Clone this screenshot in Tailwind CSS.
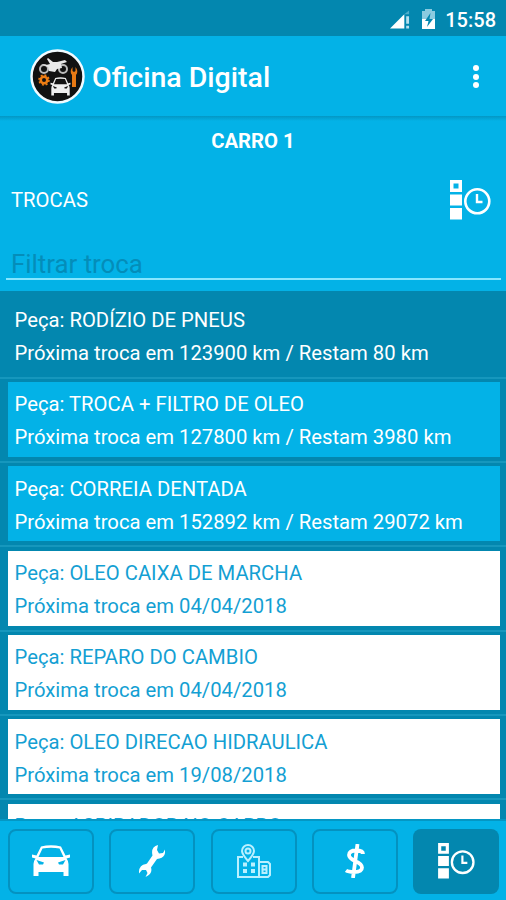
<!DOCTYPE html>
<html lang="pt-BR">
<head>
<meta charset="utf-8">
<title>Oficina Digital</title>
<script src="https://cdn.jsdelivr.net/npm/@tailwindcss/browser@4"></script>
</head>
<body class="w-[506px] h-[900px] overflow-hidden bg-[#03b2e7] font-[Roboto,sans-serif] text-white">
<svg class="hidden">
  <symbol id="schedule" viewBox="0 0 42 40">
    <path fill="currentColor" fill-rule="evenodd" d="M0 0h12v12H0zM3.5 3.5v5h5v-5zM0 14.5h12v11H0zM0 28h12v11.5H0z"/>
    <circle cx="27.3" cy="21.3" r="12" fill="none" stroke="currentColor" stroke-width="2.6"/>
    <path d="M27 14v8h5.500" fill="none" stroke="currentColor" stroke-width="2.4"/>
  </symbol>
  <symbol id="car" viewBox="0 0 40 32">
    <path fill="currentColor" fill-rule="evenodd" d="M10 1.500Q20-1 30 1.500L34.500 10.500 39 9.500V12.500L35.500 13.500Q37.500 16 37.500 19V31H32.500V27H7.500V31H2.500V19Q2.500 16 4.500 13.500L1 12.500V9.500L5.500 10.500ZM11.500 3.500 7.500 12H32.500L28.500 3.500Q20 2 11.500 3.500ZM5.500 15 13 17.500 12 19.500H8ZM34.500 15 27 17.500 28 19.500H32Z"/>
  </symbol>
  <symbol id="wrench" viewBox="0 0 26 32">
    <path fill="currentColor" d="M19 0 18 5 20 8.500 24 8 26 4.500Q27 12 20.500 13.500L18 14 12 22.500Q14 29 6.500 32L8.500 28 7 25 3 25 0 28.500Q-.5 20 7 19L8 18.500 13.500 10.500Q11.500 2 19 0Z"/>
  </symbol>
</svg>
<div class="flex h-full flex-col">
  <header class="shrink-0">
    <div class="flex h-[36px] items-center justify-end bg-[#0387af] pt-[3px] pr-[10px]">
      <svg class="mr-[11px] h-[20px] w-[20px]" viewBox="0 0 21 20"><path fill="#fff" d="M0 19 15 4V19Z"/><path fill="#9bd3e6" d="M15 4 20 0V4H15Z" opacity=".5"/><path fill="#b8e0ee" d="M17 6h3v8h-3zM17 16h3v3h-3z"/></svg>
      <svg class="mr-[9px] h-[21px] w-[15px]" viewBox="0 0 15 21"><path fill="#8acbe0" d="M4 0h7v2h3v9H1V2h3z"/><path fill="#fff" d="M1 10h13v10H1z"/><path fill="#0387af" d="M9.500 4 4 12h3.500L6 18l6-8H8.500z"/></svg>
      <span class="text-[20px] leading-[24px] font-medium">15:58</span>
    </div>
    <div class="flex h-[80px] items-center pr-[27px] pl-[30px]">
      <svg class="h-[55px] w-[55px]" viewBox="0 0 55 55">
        <circle cx="27.500" cy="27.500" r="26" fill="#111" stroke="#f2fbff" stroke-width="2.500"/>
        <g fill="none" stroke="#bbb" stroke-width="2"><circle cx="14" cy="20" r="4"/><circle cx="33" cy="20" r="4"/></g>
        <path fill="#e8e8e8" d="M11 15 16 16 20 15 17 10 18 9 23 13 27 13 35 11 37 13 31 15 32 19 27 20 25 23 19 22 18 18Z"/>
        <circle cx="14" cy="31" r="3.300" fill="none" stroke="#ef7d13" stroke-width="2.600"/><circle cx="14" cy="31" r="5" fill="none" stroke="#ef7d13" stroke-width="1.500" stroke-dasharray="2 1.900"/>
        <path fill="#e87914" d="M42.500 18v4l1.500 1 1.500-1v-4q3.500 4.500.5 8v12h-4V26q-3-3.500.5-8Z"/>
        <svg x="20" y="28" width="21" height="19" viewBox="0 0 40 32" preserveAspectRatio="none" color="#eee"><use href="#car"/></svg>
      </svg>
      <h1 class="ml-[7px] pt-[3px] text-[28.500px] leading-[34px] font-medium">Oficina Digital</h1>
      <div class="ml-auto flex flex-col gap-[2.500px] pt-[1px]"><i class="h-[6px] w-[6px] rounded-full bg-white"></i><i class="h-[6px] w-[6px] rounded-full bg-white"></i><i class="h-[6px] w-[6px] rounded-full bg-white"></i></div>
    </div>
    <div class="h-[5px] bg-linear-to-b from-[#0497c4] to-[#03b2e7]"></div>
    <h2 class="h-[40px] pt-[8px] text-center text-[20.300px] leading-[24px] font-bold">CARRO 1</h2>
    <div class="flex h-[78px] items-center justify-between pr-[14px] pl-[11px]">
      <span class="text-[20.250px] leading-[24px]">TROCAS</span>
      <svg class="h-[40px] w-[42px]"><use href="#schedule"/></svg>
    </div>
    <div class="mr-[5px] ml-[6px] h-[41px] border-b-2 border-[#86e6ff] pt-[10px] pl-[5px] text-[25.800px] leading-[30px] text-[#048db9]">Filtrar troca</div>
    <div class="h-[11px]"></div>
  </header>
  <main id="list" class="h-[528px] shrink-0 overflow-hidden bg-[#0387af] text-[20.250px] leading-[33px]"></main>
  <nav class="flex grow justify-between border-t-2 border-[#0497c4] pr-[7px] pl-[8px] pt-[7.500px]">
    <div class="flex h-[65px] w-[86px] items-center justify-center rounded-[8px] border-2 border-[#0492c0]"><svg class="h-[32px] w-[40px]"><use href="#car"/></svg></div>
    <div class="flex h-[65px] w-[86px] items-center justify-center rounded-[8px] border-2 border-[#0492c0]"><svg class="h-[32px] w-[26px]"><use href="#wrench"/></svg></div>
    <div class="flex h-[65px] w-[86px] items-center justify-center rounded-[8px] border-2 border-[#0492c0]">
      <svg class="h-[34px] w-[36px]" viewBox="0 0 36 34" fill="none" stroke="#b9f0ff" stroke-width="2"><path d="M7 13H2V33H23V13H17M23 18H32L34 20V31L32 33H23"/><path d="M12 17Q6 10 6 7a6 6 0 0 1 12 0Q18 10 12 17Z"/><circle cx="12" cy="7" r="2.500"/><path d="M7 20.500h4M7 27h4M15 20.500h4M15 27h4" stroke-width="4"/><path d="M26.500 22h4v7h-4zM26.500 25.500h4"/></svg>
    </div>
    <div class="flex h-[65px] w-[86px] items-center justify-center rounded-[8px] border-2 border-[#0492c0]">
      <svg class="h-[34px] w-[20px]" viewBox="0 0 20 34" fill="none" stroke="#fff" stroke-width="3.800"><path d="M18 10Q18 6.500 11 6.500 4 6.500 4 11 4 14 10 17 17 20 17 23.500 17 28 9 28 3 28 1 26.500M12.500 0 8 34"/></svg>
    </div>
    <div class="flex h-[65px] w-[86px] items-center justify-center rounded-[8px] bg-[#0387af] pl-[1px]"><svg class="h-[36px] w-[38px]"><use href="#schedule"/></svg></div>
  </nav>
</div>
<script>
const styles = {
  plain: 'text-white',
  blue: 'bg-[#03b2e7] text-white',
  white: 'bg-white text-[#149fd3]'
};
const rows = [
  ['plain', 'RODÍZIO DE PNEUS', '123900 km / Restam 80 km'],
  ['blue', 'TROCA + FILTRO DE OLEO', '127800 km / Restam 3980 km'],
  ['blue', 'CORREIA DENTADA', '152892 km / Restam 29072 km'],
  ['white', 'OLEO CAIXA DE MARCHA', '04/04/2018'],
  ['white', 'REPARO DO CAMBIO', '04/04/2018'],
  ['white', 'OLEO DIRECAO HIDRAULICA', '19/08/2018'],
  ['white', 'ASPIRADOR NO CARRO', '19/08/2018']
];
document.getElementById('list').innerHTML = rows.map(([kind, part, due], i) => `
<section class="${i ? 'border-t-2 border-[#1697bd] pt-[3.350px]' : 'pt-[6.500px]'} pr-[6px] pl-[7.500px]">
  <div class="mb-[4px] h-[75px] whitespace-nowrap pt-[6.500px] pl-[7px] ${styles[kind]}"><p>Peça: ${part}</p><p>Próxima troca em ${due}</p></div>
</section>`).join('');
</script>
</body>
</html>
